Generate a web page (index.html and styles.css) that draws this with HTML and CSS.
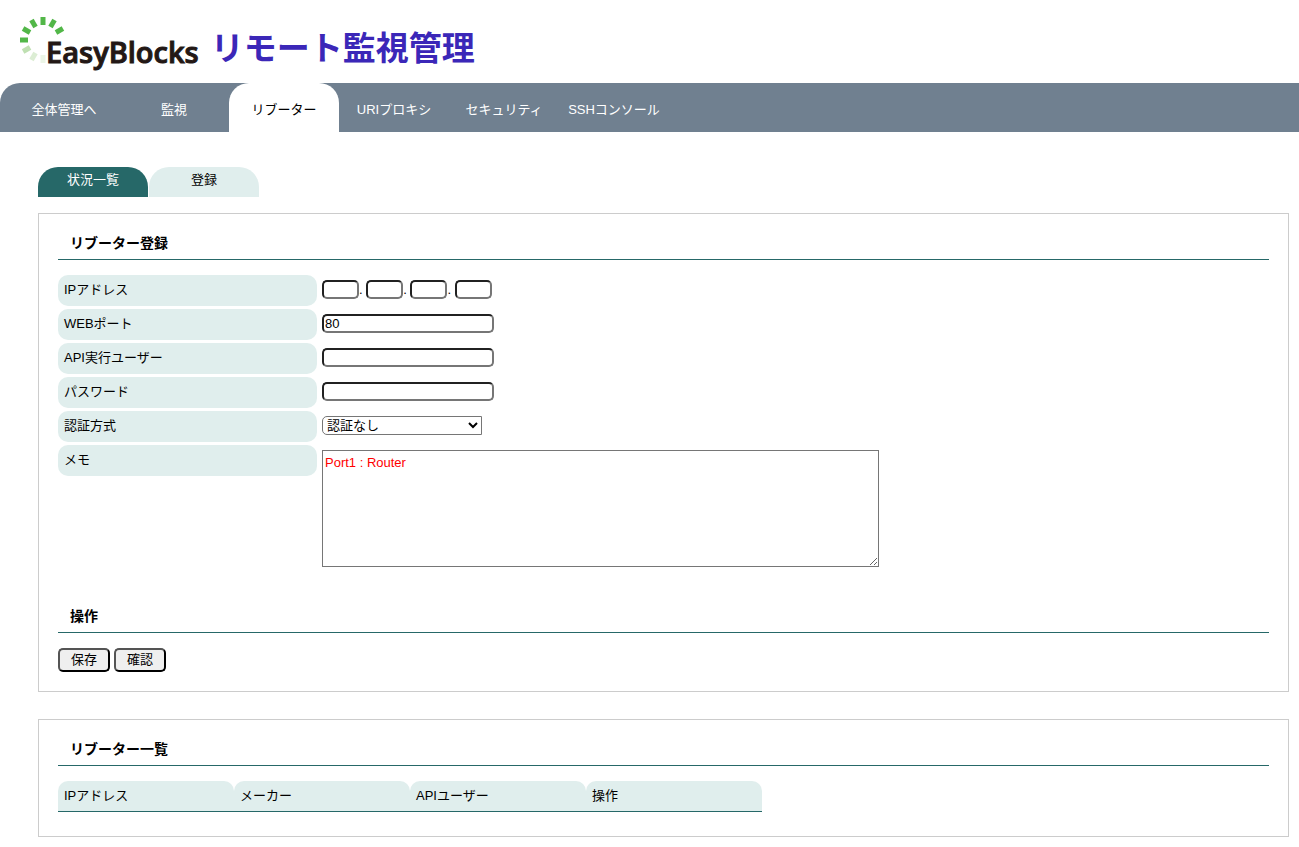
FILE: index.html
```html
<!DOCTYPE html>
<html lang="ja">
<head>
<meta charset="utf-8">
<title>EasyBlocks リモート監視管理</title>
<link rel="stylesheet" href="styles.css">
</head>
<body>
<header class="site-header">
  <svg class="logo-mark" viewBox="-23 -23 46 46" aria-hidden="true">
    <g fill="#52b748">
      <rect x="-2.5" y="-23" width="5" height="8"/>
      <rect x="-2.5" y="-23" width="5" height="8" transform="rotate(30)"/>
      <rect x="-2.5" y="-23" width="5" height="8" transform="rotate(60)"/>
      <rect x="-2.5" y="-23" width="5" height="8" transform="rotate(-30)"/>
      <rect x="-2.5" y="-23" width="5" height="8" transform="rotate(-60)"/>
      <rect x="-2.5" y="-23" width="5" height="8" transform="rotate(-90)"/>
    </g>
    <rect x="-2.5" y="-23" width="5" height="8" transform="rotate(-120)" fill="#bfe0b2"/>
    <rect x="-2.5" y="-23" width="5" height="8" transform="rotate(-150)" fill="#dcedd4"/>
    <rect x="-2.5" y="-23" width="5" height="8" transform="rotate(180)" fill="#ebf5e6"/>
  </svg>
  <span class="logo-name">EasyBlocks</span>
  <h1 class="site-title">リモート監視管理</h1>
</header>
<nav class="main-nav">
  <a class="nav-tab" href="#">全体管理へ</a>
  <a class="nav-tab" href="#">監視</a>
  <a class="nav-tab is-active" href="#">リブーター</a>
  <a class="nav-tab" href="#">URIプロキシ</a>
  <a class="nav-tab" href="#">セキュリティ</a>
  <a class="nav-tab" href="#">SSHコンソール</a>
</nav>
<main class="content">
  <nav class="sub-nav">
    <a class="sub-tab is-active" href="#">状況一覧</a>
    <a class="sub-tab" href="#">登録</a>
  </nav>
  <form class="panel">
    <h2 class="panel-title">リブーター登録</h2>
    <div class="fields">
      <label class="field-label" for="ip1">IPアドレス</label>
      <div class="field">
        <input class="text-box octet" id="ip1" type="text" aria-label="IPアドレス 1">.
        <input class="text-box octet" type="text" aria-label="IPアドレス 2">.
        <input class="text-box octet" type="text" aria-label="IPアドレス 3">.
        <input class="text-box octet" type="text" aria-label="IPアドレス 4">
      </div>
      <label class="field-label" for="port">WEBポート</label>
      <div class="field"><input class="text-box" id="port" type="text" value="80"></div>
      <label class="field-label" for="user">API実行ユーザー</label>
      <div class="field"><input class="text-box" id="user" type="text"></div>
      <label class="field-label" for="pass">パスワード</label>
      <div class="field"><input class="text-box" id="pass" type="password"></div>
      <label class="field-label" for="auth">認証方式</label>
      <div class="field"><select class="drop-down" id="auth"><option>認証なし</option></select></div>
      <label class="field-label" for="memo">メモ</label>
      <div class="field"><textarea class="memo" id="memo">Port1 : Router</textarea></div>
    </div>
    <h2 class="panel-title">操作</h2>
    <div class="actions">
      <button class="button" type="button">保存</button>
      <button class="button" type="button">確認</button>
    </div>
  </form>
  <section class="panel">
    <h2 class="panel-title">リブーター一覧</h2>
    <table class="list">
      <thead>
        <tr><th>IPアドレス</th><th>メーカー</th><th>APIユーザー</th><th>操作</th></tr>
      </thead>
    </table>
  </section>
</main>
</body>
</html>
```

FILE: styles.css
```css
* { box-sizing: border-box; }

body {
  margin: 0;
  background: #fff;
  color: #000;
  font-family: "Liberation Sans", "Noto Sans CJK JP", sans-serif;
  font-size: 13px;
  line-height: 20px;
}

a { text-decoration: none; }

.site-header {
  display: flex;
  align-items: flex-start;
  padding: 17px 20px 8px;
}

.logo-mark { width: 46px; height: 46px; }

.logo-name {
  margin-left: -20px;
  padding-top: 12px;
  color: #231815;
  font: 600 29px/46px "Open Sans", sans-serif;
  -webkit-text-stroke: 1px #231815;
}

.site-title {
  margin: 0 0 0 12px;
  padding-top: 6px;
  color: #3b27b8;
  font: 700 33px/46px "Noto Sans CJK JP", sans-serif;
}

.main-nav {
  display: flex;
  padding-left: 9px;
  background: #708090;
  border-top-left-radius: 20px;
}

.nav-tab {
  width: 110px;
  padding: 17px 0 12px;
  border-radius: 20px 20px 0 0;
  color: #fff;
  text-align: center;
}

.nav-tab.is-active { background: #fff; color: #000; }

.content { padding: 35px 10px 10px 38px; }

.sub-nav { display: flex; gap: 1px; margin-bottom: 16px; }

.sub-tab {
  width: 110px;
  padding: 3px 0 7px;
  border-radius: 20px 20px 0 0;
  background: #e0eeed;
  color: #000;
  text-align: center;
}

.sub-tab.is-active { background: #266868; color: #fff; }

.panel { padding: 19px; border: 1px solid #ccc; }

.panel + .panel { margin-top: 27px; padding-bottom: 24px; }

.panel-title {
  margin: 0 0 15px;
  padding: 0 12px 6px;
  border-bottom: 1px solid #266868;
  font-size: 14px;
  line-height: 20px;
}

.fields {
  display: grid;
  grid-template-columns: 259px 1fr;
  gap: 3px 5px;
  align-items: start;
  margin-bottom: 39px;
}

.field-label {
  padding: 5px 6px 6px;
  border-radius: 10px;
  background: #e0eeed;
}

.field { padding-top: 5px; line-height: 19px; }

.text-box {
  width: 172px;
  height: 19px;
  padding: 0 1px;
  border: 2px inset #767676;
  border-radius: 5px;
  font: inherit;
  line-height: 15px;
  vertical-align: top;
}

.octet { width: 37px; }

.drop-down {
  width: 160px;
  height: 19px;
  border: 1px solid #767676;
  border-radius: 5px 0 0 5px;
  background: #fff;
  color: #000;
  font: inherit;
  vertical-align: top;
}

.memo {
  display: block;
  width: 557px;
  max-width: 100%;
  height: 117px;
  padding: 2px;
  border: 1px solid #767676;
  color: #f00;
  font: inherit;
  resize: both;
}

.actions { display: flex; gap: 4px; }

.button {
  padding: 0 11px;
  border: 2px outset #000;
  border-radius: 5px;
  background: #efefef;
  color: #000;
  font: inherit;
}

.list { border-collapse: separate; border-spacing: 0; }

.list th {
  width: 176px;
  padding: 5px 6px;
  border-bottom: 1px solid #266868;
  border-radius: 10px 10px 0 0;
  background: #e0eeed;
  font-weight: 400;
  text-align: left;
}
```
